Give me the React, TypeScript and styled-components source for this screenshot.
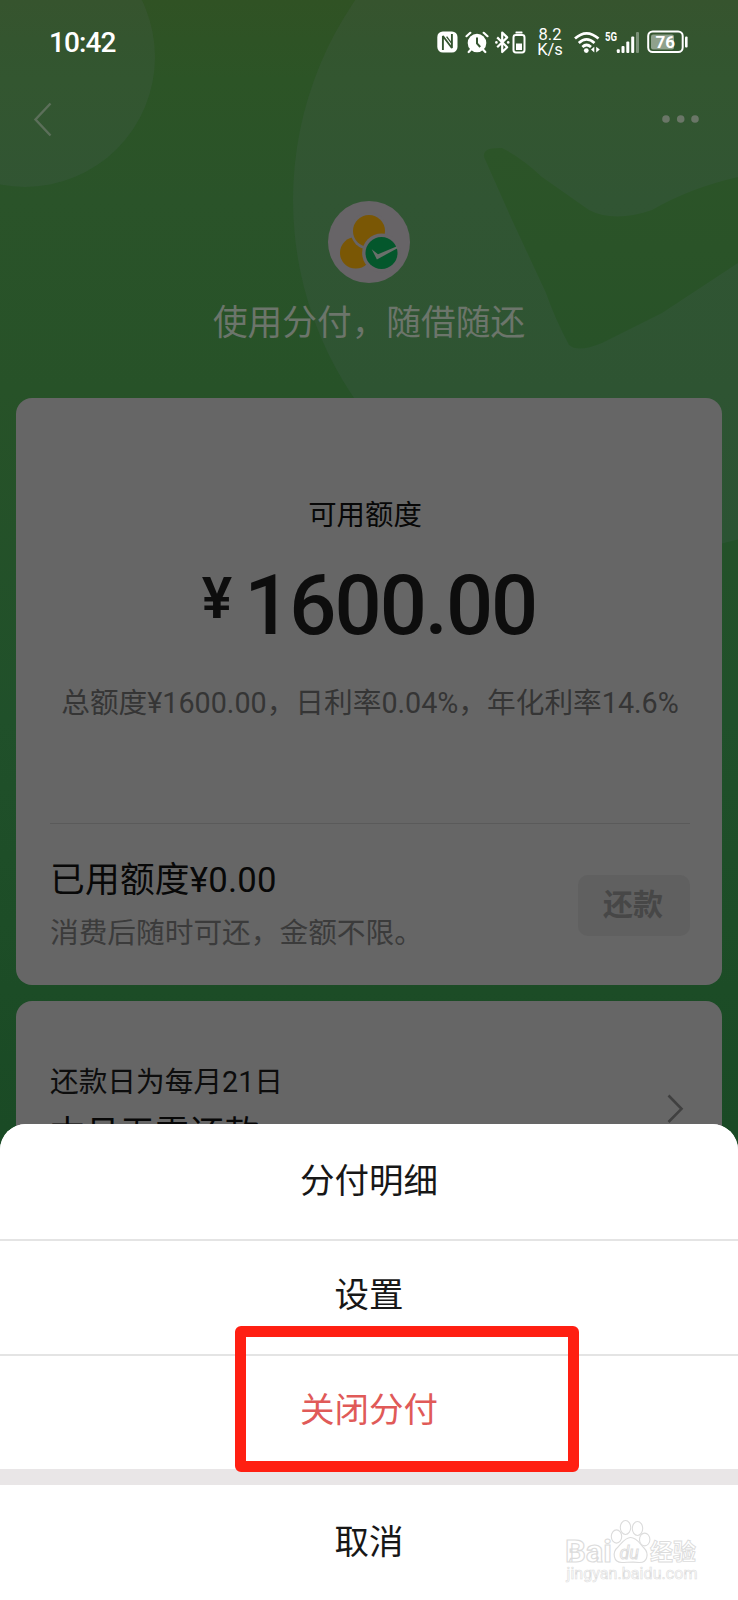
import React from 'react';
import styled, { createGlobalStyle } from 'styled-components';

const GlobalStyle = createGlobalStyle`
  * { box-sizing: border-box; }
  body {
    margin: 0;
    background: #1a4a25;
    font-family: Roboto, "Noto Sans CJK SC", sans-serif;
  }
`;

const Screen = styled.main`
  position: relative;
  width: 738px;
  height: 1600px;
  overflow: hidden;
  display: flex;
  flex-direction: column;
  background: linear-gradient(
    180deg,
    #305224 0,
    #2c5426 80px,
    #2a5329 200px,
    #275228 390px,
    #20502a 720px,
    #1c4c26 990px,
    #1a4a25 1130px
  );
`;

const Backdrop = styled.svg`
  position: absolute;
  inset: 0;
`;

const StatusBar = styled.header`
  position: relative;
  height: 84px;
  padding: 0 49px;
  display: flex;
  justify-content: space-between;
  align-items: center;
  color: #fff;
`;

const Clock = styled.time`
  padding-top: 2px;
  font-size: 28px;
  font-weight: 500;
  line-height: 32px;
  letter-spacing: -0.9px;
`;

const StatusIcons = styled.div`
  display: flex;
  align-items: center;
`;

const StatusIcon = styled.svg<{ $gap?: number }>`
  display: block;
  flex: none;
  margin-left: ${(p) => p.$gap ?? 0}px;
`;

const NetSpeed = styled.div`
  width: 28px;
  margin-left: 10px;
  display: flex;
  flex-direction: column;
  align-items: center;
  font-size: 16.5px;
  line-height: 15px;
`;

const NavBar = styled.nav`
  position: relative;
  height: 70px;
  padding: 0 38px 0 32px;
  display: flex;
  justify-content: space-between;
  align-items: center;
`;

const Brand = styled.section`
  position: relative;
  height: 244px;
  padding-top: 47px;
  display: flex;
  flex-direction: column;
  align-items: center;
`;

const Slogan = styled.h1`
  margin: 15px 0 0;
  font-size: 34.7px;
  font-weight: 400;
  line-height: 50px;
  color: #6c756b;
  white-space: nowrap;
`;

const Cards = styled.div`
  position: relative;
  padding: 0 16px;
  display: flex;
  flex-direction: column;
  gap: 16px;
`;

const Card = styled.section<{ $height: number }>`
  height: ${(p) => p.$height}px;
  padding: 0 32px 0 34px;
  border-radius: 16px;
  background: #666;
`;

const Limit = styled.div`
  height: 425px;
  padding-top: 97px;
  display: flex;
  flex-direction: column;
  align-items: center;
`;

const LimitLabel = styled.div`
  margin-right: 10px;
  font-size: 28.4px;
  line-height: 42px;
  color: #080808;
`;

const Amount = styled.div`
  margin: 21px 2px 0 0;
  height: 96px;
  display: flex;
  align-items: flex-start;
  font-weight: 500;
  line-height: 96px;
  color: #0d0d0d;
`;

const Currency = styled.span`
  margin-right: 12px;
  font-size: 57px;
  font-weight: 600;
  line-height: 81px;
`;

const Digits = styled.span`
  font-size: 83px;
  letter-spacing: -2px;
`;

const Rates = styled.p`
  margin: 28px 0 0;
  font-size: 28.7px;
  line-height: 42px;
  color: #353535;
  white-space: nowrap;
`;

const Rule = styled.hr`
  height: 1px;
  margin: 0;
  border: 0;
  background: #5a5a5a;
`;

const Used = styled.div`
  height: 160px;
  display: flex;
  justify-content: space-between;
  align-items: flex-start;
`;

const UsedText = styled.div`
  padding-top: 31px;
`;

const Heading = styled.div`
  font-size: 34.7px;
  line-height: 51px;
  letter-spacing: 0.25px;
  color: #080808;
  white-space: nowrap;
`;

const Note = styled.div<{ $dark?: boolean }>`
  font-size: 28.7px;
  line-height: 54px;
  color: ${(p) => (p.$dark ? '#0d0d0d' : '#3b3b3b')};
  white-space: nowrap;
`;

const RepayButton = styled.button`
  width: 112px;
  height: 61px;
  margin-top: 51px;
  padding: 0 2px 7px 0;
  border: 0;
  border-radius: 10px;
  background: #606060;
  color: #474747;
  font-family: inherit;
  font-size: 30px;
  font-weight: 600;
`;

const Schedule = styled.div`
  padding: 54px 6px 0 0;
  display: flex;
  justify-content: space-between;
`;

const Chevron = styled.svg`
  margin-top: 38px;
`;

const Sheet = styled.section`
  position: absolute;
  left: 0;
  right: 0;
  bottom: 0;
  height: 476px;
  display: flex;
  flex-direction: column;
  border-radius: 26px 26px 0 0;
  overflow: hidden;
  background: #fff;
`;

const SheetItem = styled.button<{ $danger?: boolean; $divided?: boolean }>`
  flex: none;
  height: 115px;
  padding: 0 0 ${(p) => (p.$divided ? 11 : 8)}px;
  border: 0;
  border-top: ${(p) => (p.$divided ? '2px solid #e4e4e4' : '0')};
  background: #fff;
  font-family: inherit;
  font-size: 34.5px;
  color: ${(p) => (p.$danger ? '#e05a58' : '#171717')};
`;

const SheetGap = styled.div`
  flex: none;
  height: 16px;
  background: #e9e6e7;
`;

const Highlight = styled.div`
  position: absolute;
  left: 235px;
  top: 1326px;
  width: 344px;
  height: 146px;
  border: 11px solid #ff1f12;
  border-radius: 6px;
`;

const Watermark = styled.svg`
  position: absolute;
  left: 560px;
  top: 1515px;
`;

function HeaderArt() {
  return (
    <Backdrop width="738" height="560" viewBox="0 0 738 560">
      <defs>
        <linearGradient id="tick" x1="0" y1="0" x2="0" y2="1">
          <stop offset="0" stopColor="#2c5428" />
          <stop offset="1" stopColor="#285228" />
        </linearGradient>
      </defs>
      <circle cx="25" cy="57" r="130" fill="#786ea0" opacity="0.09" />
      <circle cx="645" cy="200" r="352" fill="#786ea0" opacity="0.09" />
      <path
        d="M484 157Q482 147 502 148Q522 158 542 177L589 210Q614 223 652 210Q690 188 738 177V263L662 313L602 343Q578 353 569 345Q555 319 546 293L512 220Z"
        fill="url(#tick)"
      />
    </Backdrop>
  );
}

function StatusGlyphs() {
  return (
    <StatusIcons>
      <StatusIcon width="21" height="22" viewBox="0 0 21 22">
        <rect x="0.3" y="0.5" width="20.2" height="21" rx="5.5" fill="#fff" />
        <path
          d="M5.9 19V5L14.9 17V3"
          fill="none"
          stroke="#34542f"
          strokeWidth="1.9"
          strokeLinejoin="bevel"
        />
        <path d="M9.6 5.6L14.9 12.6" stroke="#34542f" strokeWidth="1.3" />
      </StatusIcon>
      <StatusIcon $gap={7} width="24" height="23" viewBox="0 0 24 23">
        <circle cx="12" cy="12" r="9.3" fill="#fff" />
        <path
          d="M1.5 5.2L5.3 1.8M18.7 1.8L22.5 5.2M6 18.5L3.7 21M18 18.5L20.3 21"
          stroke="#fff"
          strokeWidth="2.2"
          strokeLinecap="round"
        />
        <path d="M12 6.5V12.3L15.2 16" fill="none" stroke="#34542f" strokeWidth="2" />
      </StatusIcon>
      <StatusIcon $gap={6} width="15" height="23" viewBox="0 0 15 23">
        <path
          d="M2.2 6.4L12.2 16.2L7.2 21V1.6L12.2 6.4L2.2 16.2"
          fill="none"
          stroke="#fff"
          strokeWidth="2.2"
          strokeLinejoin="round"
        />
        <circle cx="1.4" cy="11.4" r="1.3" fill="#fff" />
        <circle cx="13.2" cy="11.4" r="1.3" fill="#fff" />
      </StatusIcon>
      <StatusIcon $gap={2} width="14" height="23" viewBox="0 0 14 23">
        <rect x="3.5" y="0.5" width="7" height="2" rx="0.6" fill="#fff" />
        <rect x="1.5" y="4" width="11" height="17.5" rx="2.4" fill="none" stroke="#fff" strokeWidth="2" />
        <rect x="4" y="12.5" width="6" height="6.5" fill="#fff" />
      </StatusIcon>
      <NetSpeed>
        <span>8.2</span>
        <span>K/s</span>
      </NetSpeed>
      <StatusIcon $gap={10} width="27" height="23" viewBox="0 0 27 23">
        <g fill="none" stroke="#fff" strokeWidth="2.7">
          <path d="M1 7.6Q12.5 -3 24.5 7.6" />
          <path d="M4.8 12Q12.5 4.8 20.5 12" />
          <path d="M8.4 16Q12.5 12 17 16" />
        </g>
        <circle cx="12.3" cy="19.6" r="2.4" fill="#fff" />
        <path d="M20.3 15.8V21.4L17 18.6ZM22.2 15.8V21.4L25.8 18.6Z" fill="#fff" />
      </StatusIcon>
      <StatusIcon $gap={3} width="36" height="23" viewBox="0 0 36 23">
        <text x="1" y="10" fontSize="13" fontWeight="700" fill="#fff" textLength="12" lengthAdjust="spacingAndGlyphs">
          5G
        </text>
        <g fill="#fff">
          <rect x="12.8" y="18.3" width="3" height="3.7" rx="1" />
          <rect x="17.5" y="15" width="3" height="7" rx="1" />
          <rect x="22.3" y="10.5" width="3" height="11.5" rx="1" />
          <rect x="27.2" y="5.5" width="3" height="16.5" rx="1" />
          <rect x="32" y="1" width="3" height="21" rx="1" opacity="0.35" />
        </g>
      </StatusIcon>
      <StatusIcon $gap={7} width="42" height="24" viewBox="0 0 42 24">
        <rect x="4" y="4.4" width="23" height="15" rx="2" fill="#fff" opacity="0.45" />
        <rect x="1.2" y="1.5" width="34.5" height="20.5" rx="4.5" fill="none" stroke="#fff" strokeWidth="2" />
        <rect x="38" y="6.5" width="2.6" height="11" rx="1" fill="#fff" />
        <text x="18.3" y="17.8" fontSize="17" fontWeight="700" fill="#fff" textAnchor="middle">
          76
        </text>
      </StatusIcon>
    </StatusIcons>
  );
}

function BrandLogo() {
  return (
    <svg width="82" height="82" viewBox="328 201 82 82">
      <circle cx="369" cy="242" r="41" fill="#676467" />
      <circle cx="355.8" cy="252.8" r="15.8" fill="#7a5705" />
      <circle cx="369" cy="231" r="18.6" fill="#676467" />
      <circle cx="369" cy="231" r="16" fill="#7a5705" />
      <circle cx="381.5" cy="253" r="19.4" fill="#676467" />
      <circle cx="381.5" cy="253" r="16" fill="#04572c" />
      <path d="M371.7 249.3L378 254.2L397 246.3V248.6L376.9 259.4Z" fill="#69706b" />
    </svg>
  );
}

function BaiduMark() {
  return (
    <Watermark width="150" height="75" viewBox="0 0 150 75">
      <g fill="#fff" stroke="#dcdcdc" strokeWidth="1.1" fontFamily="Roboto, 'Noto Sans CJK SC', sans-serif">
        <text x="5" y="46.5" fontSize="31" fontWeight="700" textLength="47" lengthAdjust="spacingAndGlyphs">
          Bai
        </text>
        <ellipse cx="56.5" cy="21.5" rx="5.2" ry="6.6" />
        <ellipse cx="65.5" cy="12.5" rx="5.2" ry="7" />
        <ellipse cx="77.5" cy="13.5" rx="5.2" ry="7" />
        <ellipse cx="84.7" cy="24.5" rx="5.2" ry="6.4" />
        <path d="M70.5 22.5C65 22.5 62 28 58 32C52 37 53 47.5 62 47.5C67 47.5 74 46.5 79 47.5C88 48 89 38 84 33C80 29 77 22.5 70.5 22.5Z" />
        <text x="59.5" y="43.5" fontSize="18" fontStyle="italic" strokeWidth="0.9">
          du
        </text>
        <text x="90" y="45" fontSize="23" fontWeight="700" strokeWidth="0.9">
          经验
        </text>
        <text x="6.5" y="64" fontSize="16" strokeWidth="0.6" textLength="131">
          jingyan.baidu.com
        </text>
      </g>
    </Watermark>
  );
}

export default function App() {
  return (
    <Screen>
      <GlobalStyle />
      <HeaderArt />
      <StatusBar>
        <Clock>10:42</Clock>
        <StatusGlyphs />
      </StatusBar>
      <NavBar>
        <svg width="22" height="36" viewBox="0 0 22 36">
          <path d="M18.5 2.5L3.5 18.5L18.5 34.5" fill="none" stroke="#5c6f5a" strokeWidth="2.4" />
        </svg>
        <svg width="38" height="10" viewBox="0 0 38 10">
          <g fill="#6a7667">
            <circle cx="4" cy="5" r="3.8" />
            <circle cx="18.7" cy="5" r="3.8" />
            <circle cx="33" cy="5" r="3.8" />
          </g>
        </svg>
      </NavBar>
      <Brand>
        <BrandLogo />
        <Slogan>使用分付，随借随还</Slogan>
      </Brand>
      <Cards>
        <Card $height={587}>
          <Limit>
            <LimitLabel>可用额度</LimitLabel>
            <Amount>
              <Currency>¥</Currency>
              <Digits>1600.00</Digits>
            </Amount>
            <Rates>总额度¥1600.00，日利率0.04%，年化利率14.6%</Rates>
          </Limit>
          <Rule />
          <Used>
            <UsedText>
              <Heading>已用额度¥0.00</Heading>
              <Note>消费后随时可还，金额不限。</Note>
            </UsedText>
            <RepayButton>还款</RepayButton>
          </Used>
        </Card>
        <Card $height={200}>
          <Schedule>
            <div>
              <Note $dark>还款日为每月21日</Note>
              <Heading>本月无需还款</Heading>
            </div>
            <Chevron width="18" height="32" viewBox="0 0 18 32">
              <path d="M2.5 2.5L15.5 15.8L2.5 29" fill="none" stroke="#404040" strokeWidth="2.6" />
            </Chevron>
          </Schedule>
        </Card>
      </Cards>
      <Sheet>
        <SheetItem>分付明细</SheetItem>
        <SheetItem $divided>设置</SheetItem>
        <SheetItem $divided $danger>关闭分付</SheetItem>
        <SheetGap />
        <SheetItem>取消</SheetItem>
      </Sheet>
      <Highlight />
      <BaiduMark />
    </Screen>
  );
}
